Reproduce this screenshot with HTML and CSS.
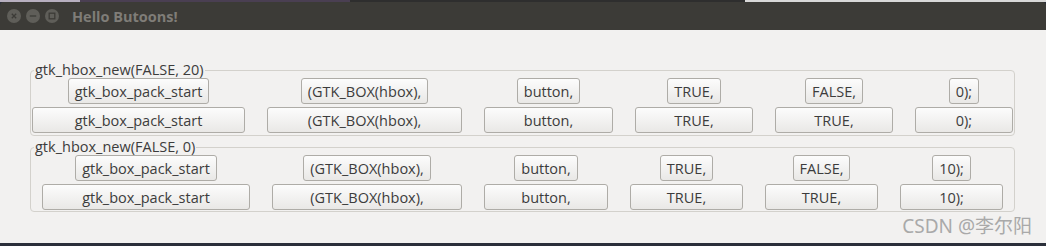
FILE: index.html
```html
<!DOCTYPE html>
<html lang="en">
<head>
  <meta charset="UTF-8"/>
  <title>Hello Butoons!</title>
  <link rel="stylesheet" href="styles.css">
</head>
<body>
<div class="desk-top"></div>
<div class="window">
  <div class="titlebar">
    <div class="controls">
      <svg class="ctl" width="14" height="14" viewBox="0 0 14 14"><circle cx="7" cy="7" r="7" fill="#5f5e59"/><path d="M4.8 4.8 L9.2 9.2 M9.2 4.8 L4.8 9.2" stroke="#3c3b37" stroke-width="1.3"/></svg>
      <svg class="ctl" width="14" height="14" viewBox="0 0 14 14"><circle cx="7" cy="7" r="7" fill="#5f5e59"/><path d="M3.8 7 H10.2" stroke="#3c3b37" stroke-width="1.3"/></svg>
      <svg class="ctl" width="14" height="14" viewBox="0 0 14 14"><circle cx="7" cy="7" r="7" fill="#5f5e59"/><rect x="4.2" y="4.2" width="5.6" height="5.6" fill="none" stroke="#3c3b37" stroke-width="1.3"/></svg>
    </div>
    <span class="title">Hello Butoons!</span>
  </div>
  <div class="content">
    <fieldset class="frame frame-a">
      <legend>gtk_hbox_new(FALSE, 20)</legend>
      <div class="row">
        <div class="cell c1"><button class="btn">gtk_box_pack_start</button></div>
        <div class="cell c2"><button class="btn">(GTK_BOX(hbox),</button></div>
        <div class="cell c3"><button class="btn">button,</button></div>
        <div class="cell c4"><button class="btn">TRUE,</button></div>
        <div class="cell c5"><button class="btn">FALSE,</button></div>
        <div class="cell c6"><button class="btn">0);</button></div>
      </div>
      <div class="row fill">
        <div class="cell c1"><button class="btn">gtk_box_pack_start</button></div>
        <div class="cell c2"><button class="btn">(GTK_BOX(hbox),</button></div>
        <div class="cell c3"><button class="btn">button,</button></div>
        <div class="cell c4"><button class="btn">TRUE,</button></div>
        <div class="cell c5"><button class="btn">TRUE,</button></div>
        <div class="cell c6"><button class="btn">0);</button></div>
      </div>
    </fieldset>
    <fieldset class="frame frame-b">
      <legend>gtk_hbox_new(FALSE, 0)</legend>
      <div class="row">
        <div class="cell c1"><button class="btn">gtk_box_pack_start</button></div>
        <div class="cell c2"><button class="btn">(GTK_BOX(hbox),</button></div>
        <div class="cell c3"><button class="btn">button,</button></div>
        <div class="cell c4"><button class="btn">TRUE,</button></div>
        <div class="cell c5"><button class="btn">FALSE,</button></div>
        <div class="cell c6"><button class="btn">10);</button></div>
      </div>
      <div class="row fill">
        <div class="cell c1"><button class="btn">gtk_box_pack_start</button></div>
        <div class="cell c2"><button class="btn">(GTK_BOX(hbox),</button></div>
        <div class="cell c3"><button class="btn">button,</button></div>
        <div class="cell c4"><button class="btn">TRUE,</button></div>
        <div class="cell c5"><button class="btn">TRUE,</button></div>
        <div class="cell c6"><button class="btn">10);</button></div>
      </div>
    </fieldset>
    <div class="watermark">CSDN @李尔阳</div>
  </div>
</div>
<div class="desk-bottom"></div>
</body>
</html>
```

FILE: styles.css
```css
body { margin:0; width:1046px; height:246px; overflow:hidden; background:#2b2f3a; font-family:"Open Sans", sans-serif; }
.desk-top { height:2px; background:linear-gradient(to right, #b7afbf 0 80px, #4a3f52 80px 350px, #2e2e2e 350px 745px, #d8d8d8 745px); }

.titlebar { height:28px; background:#3c3b37; border-radius:4px 4px 0 0; display:flex; align-items:center; padding-left:7px; }
.controls { display:flex; gap:5px; }
.ctl { display:block; }
.title { margin-left:13px; font-size:14.5px; font-weight:bold; color:#7f7d78; }

.content { position:relative; height:213px; box-sizing:border-box; padding-top:32px; background:#f2f1f0; }
.frame { margin:0 31px 0 30px; padding:0 1px 2px; border:1px solid #d3d1cc; border-radius:4px; min-inline-size:0; }
.frame legend { margin-left:2px; padding:0 1px; font-size:14.5px; line-height:16px; color:#3c3c3c; }
.frame-b { margin-top:3px; padding-bottom:1px; }

.row { display:flex; gap:22px; height:26px; }
.row + .row { margin-top:3px; }
.cell { flex:none; display:flex; justify-content:center; }

.frame-a .c1 { width:213px; }
.frame-a .c2 { width:195px; }
.frame-a .c3 { width:129px; }
.frame-a .c4 { width:118px; }
.frame-a .c5 { width:118px; }
.frame-a .c6 { width:98px; }

.frame-b .row { padding-left:10px; }
.frame-b .c1 { width:208px; }
.frame-b .c2 { width:190px; }
.frame-b .c3 { width:124px; }
.frame-b .c4 { width:113px; }
.frame-b .c5 { width:113px; }
.frame-b .c6 { width:103px; }

.btn { height:26px; box-sizing:border-box; padding:0 6px; border:1px solid #aeaca7; border-radius:3px; background:linear-gradient(#fcfcfc, #e9e8e6); font-family:"Open Sans", sans-serif; font-size:14.5px; color:#3c3c3c; }
.fill .btn { width:100%; }

.watermark { position:absolute; right:14px; top:183px; font-family:"Noto Sans", "Noto Sans CJK SC", sans-serif; font-size:19px; line-height:26px; color:#a9a9a9; }
```
